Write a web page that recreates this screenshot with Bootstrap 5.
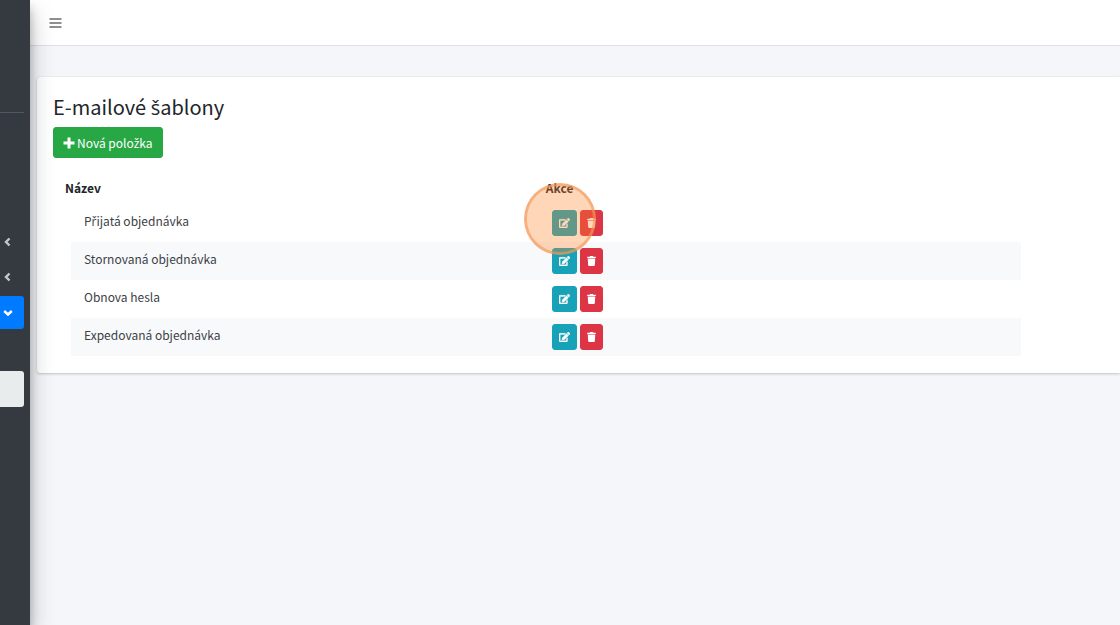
<!DOCTYPE html>
<html lang="cs">
<head>
<meta charset="utf-8">
<meta name="viewport" content="width=device-width, initial-scale=1">
<title>E-mailové šablony</title>
<link href="https://cdn.jsdelivr.net/npm/bootstrap@5.3.0/dist/css/bootstrap.min.css" rel="stylesheet">
<style>
body { font-family: "Noto Sans CJK SC", "Open Sans", sans-serif; font-size: 12px; line-height: 18px; color: #212529; background: #f4f6f9; }
/* letters with a caron, missing from the main family */
.hk { font-family: "Open Sans", "Noto Sans", sans-serif; line-height: 1; }
.side { width: 30px; background: #343a40; box-shadow: 0 12px 24px rgba(0,0,0,.25), 0 8px 9px rgba(0,0,0,.22); z-index: 2; padding-top: 112px; }
.side-rule { border-top: 1px solid #4f5962; width: 24px; margin-bottom: 112px; }
.side-link { width: 24px; height: 33px; margin-bottom: 2px; padding-left: 3px; color: #c2c7d0; border-radius: 0 3px 3px 0; }
.side-link.active { background: #007bff; color: #fff; margin-top: 3px; }
.side-sub { width: 24px; height: 36px; margin-top: 42px; background: #e9ecec; border-radius: 0 3px 3px 0; }
.topbar { height: 46px; border-bottom: 1px solid #dee2e6; padding-left: 19px; }
.panel { margin: 31px 0 0 7px; padding: 16px 0 17px 16px; border-radius: 3px 0 0 3px; box-shadow: 0 0 1px rgba(0,0,0,.125), 0 1px 3px rgba(0,0,0,.2); }
h1 { font-size: 20px; line-height: 28px; font-weight: 400; margin-bottom: 6px; }
.btn-new { --bs-btn-bg: #28a745; --bs-btn-border-color: #28a745; --bs-btn-color: #fff; --bs-btn-padding-x: 9px; --bs-btn-padding-y: 0; --bs-btn-border-radius: 3px; --bs-btn-font-size: 12px; height: 31px; gap: 2px; }
.list { margin: 20px 99px 0 12px; }
.list table { table-layout: fixed; border-collapse: separate; border-spacing: 0; width: 100%; }
.list th { height: 26px; padding: 0 0 6px; font-size: 12px; font-weight: 700; }
.list td { height: 38px; padding: 0; color: #3c4146; font-size: 12px; vertical-align: top; }
.list td:first-child { border-left: 6px solid transparent; background-clip: padding-box; padding: 8px 13px; }
.list td:last-child { padding: 6px; }
.list tbody tr:nth-child(even) td { background-color: #f8f9fb; }
.acts { gap: 3px; }
.act { height: 26px; border-radius: 3px; --bs-btn-padding-x: 0; --bs-btn-padding-y: 0; --bs-btn-color: #fff; }
.act-edit { width: 25px; --bs-btn-bg: #17a2b8; --bs-btn-border-color: #17a2b8; }
.act-del { width: 23px; --bs-btn-bg: #dc3545; --bs-btn-border-color: #dc3545; }
.halo { left: -28px; top: -27px; width: 72px; height: 72px; border: 3px solid rgba(244,150,80,.75); background: rgba(255,130,40,.33); background-clip: padding-box; border-radius: 50%; pointer-events: none; z-index: 3; }
</style>
</head>
<body>
<svg class="d-none" aria-hidden="true">
  <symbol id="edit" viewBox="0 0 576 512"><path fill="currentColor" stroke="currentColor" stroke-width="16" d="M402.600 83.200l90.200 90.200c3.800 3.800 3.800 10 0 13.800L274.400 405.600l-92.800 10.300c-12.400 1.400-22.900-9.100-21.500-21.500l10.300-92.800L388.800 83.200c3.800-3.800 10-3.800 13.800 0zm162-22.900l-48.800-48.800c-15.200-15.200-39.900-15.200-55.200 0l-35.400 35.400c-3.800 3.800-3.800 10 0 13.800l90.200 90.200c3.800 3.800 10 3.800 13.800 0l35.400-35.400c15.200-15.300 15.200-40 0-55.200zM384 346.200V448H64V128h229.800c3.200 0 6.200-1.300 8.500-3.500l40-40c7.600-7.600 2.200-20.500-8.500-20.500H48C21.500 64 0 85.500 0 112v352c0 26.500 21.500 48 48 48h352c26.500 0 48-21.500 48-48V306.200c0-10.700-12.900-16-20.500-8.500l-40 40c-2.200 2.300-3.500 5.300-3.500 8.500z"/></symbol>
  <symbol id="trash" viewBox="0 0 448 512"><path fill="currentColor" d="M432 32H312l-9.400-18.700A24 24 0 0 0 281.100 0H166.800a23.700 23.700 0 0 0-21.400 13.300L136 32H16A16 16 0 0 0 0 48v32a16 16 0 0 0 16 16h416a16 16 0 0 0 16-16V48a16 16 0 0 0-16-16zM53.200 467a48 48 0 0 0 47.900 45h245.800a48 48 0 0 0 47.900-45L416 128H32z"/></symbol>
  <symbol id="chev" viewBox="0 0 8 10"><path d="M6.500 1.500 3 5 6.500 8.500" fill="none" stroke="currentColor" stroke-width="2.400"/></symbol>
</svg>
<div class="d-flex min-vh-100">
  <nav class="side flex-shrink-0" aria-label="Hlavní nabídka">
    <div class="side-rule"></div>
    <a href="#" class="side-link d-flex align-items-center" aria-label="Rozbalit"><svg width="8" height="10"><use href="#chev"/></svg></a>
    <a href="#" class="side-link d-flex align-items-center" aria-label="Rozbalit"><svg width="8" height="10"><use href="#chev"/></svg></a>
    <a href="#" class="side-link active d-flex align-items-center" aria-label="Sbalit"><svg width="10" height="8" viewBox="0 0 10 8"><path d="M1.200 2 5 5.500 8.800 2" fill="none" stroke="currentColor" stroke-width="2.400"/></svg></a>
    <a href="#" class="side-sub d-block" aria-label="Šablony"></a>
  </nav>
  <div class="flex-grow-1">
    <header class="topbar bg-white d-flex align-items-center">
      <button type="button" class="btn p-0 border-0 d-flex" aria-label="Nabídka"><svg width="13" height="12" viewBox="0 0 13 12"><path d="M.5 2h12M.5 6h12M.5 10h12" stroke="#6b6b6b" stroke-width="1.500"/></svg></button>
    </header>
    <main class="panel bg-white">
      <h1>E-mailové <span class="hk">š</span>ablony</h1>
      <button type="button" class="btn btn-new d-inline-flex align-items-center"><svg width="12" height="12" viewBox="0 0 12 12"><path d="M6 .5v11M.5 6h11" stroke="#fff" stroke-width="3"/></svg><span>Nová polo<span class="hk">ž</span>ka</span></button>
      <div class="list">
        <table>
          <colgroup><col style="width:50.300%"><col></colgroup>
          <thead><tr><th scope="col">Název</th><th scope="col">Akce</th></tr></thead>
          <tbody>
            <tr><td>P<span class="hk">ř</span>ijatá objednávka</td><td><div class="acts d-flex position-relative"><button class="btn act act-edit d-flex align-items-center justify-content-center" aria-label="Upravit"><svg width="11" height="10"><use href="#edit"/></svg></button><button class="btn act act-del d-flex align-items-center justify-content-center" aria-label="Smazat"><svg width="9" height="10"><use href="#trash"/></svg></button><span class="halo position-absolute"></span></div></td></tr>
            <tr><td>Stornovaná objednávka</td><td><div class="acts d-flex"><button class="btn act act-edit d-flex align-items-center justify-content-center" aria-label="Upravit"><svg width="11" height="10"><use href="#edit"/></svg></button><button class="btn act act-del d-flex align-items-center justify-content-center" aria-label="Smazat"><svg width="9" height="10"><use href="#trash"/></svg></button></div></td></tr>
            <tr><td>Obnova hesla</td><td><div class="acts d-flex"><button class="btn act act-edit d-flex align-items-center justify-content-center" aria-label="Upravit"><svg width="11" height="10"><use href="#edit"/></svg></button><button class="btn act act-del d-flex align-items-center justify-content-center" aria-label="Smazat"><svg width="9" height="10"><use href="#trash"/></svg></button></div></td></tr>
            <tr><td>Expedovaná objednávka</td><td><div class="acts d-flex"><button class="btn act act-edit d-flex align-items-center justify-content-center" aria-label="Upravit"><svg width="11" height="10"><use href="#edit"/></svg></button><button class="btn act act-del d-flex align-items-center justify-content-center" aria-label="Smazat"><svg width="9" height="10"><use href="#trash"/></svg></button></div></td></tr>
          </tbody>
        </table>
      </div>
    </main>
  </div>
</div>
<script src="https://cdn.jsdelivr.net/npm/bootstrap@5.3.0/dist/js/bootstrap.bundle.min.js"></script>
</body>
</html>
